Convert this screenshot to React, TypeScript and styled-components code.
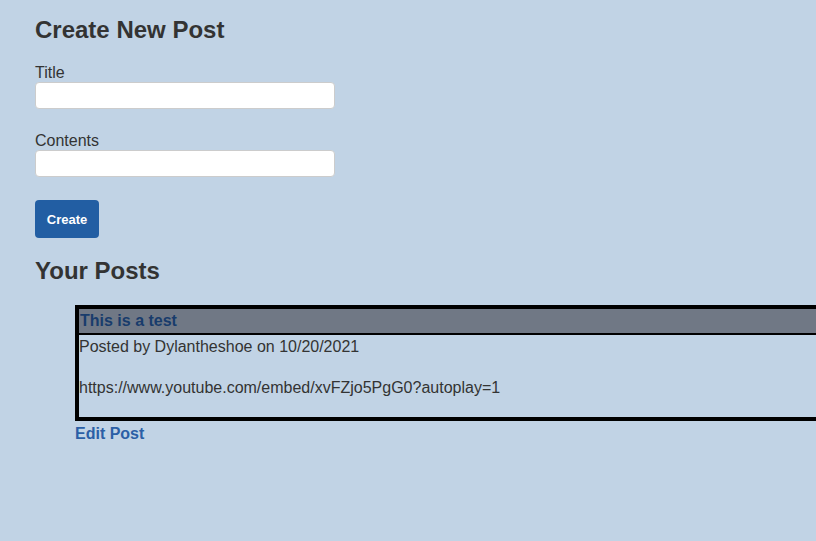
import React from "react";
import styled, { createGlobalStyle } from "styled-components";

const Global = createGlobalStyle`
  html, body {
    margin: 0;
    padding: 0;
    background: #c1d3e5;
    overflow-x: hidden;
  }
  body {
    font-family: "Liberation Sans", Arial, sans-serif;
    font-size: 16px;
    color: #333333;
  }
`;

const Page = styled.main`
  padding: 16px 35px 20px;
  display: flex;
  flex-direction: column;
  align-items: flex-start;
`;

const Heading = styled.h2`
  margin: 0;
  font-size: 24px;
  line-height: 28px;
  font-weight: bold;
  color: #333333;
`;

const Form = styled.form`
  display: flex;
  flex-direction: column;
  align-items: flex-start;
  margin-top: 20px;
`;

const Field = styled.div`
  display: flex;
  flex-direction: column;
  margin-bottom: 23px;
`;

const Label = styled.label`
  font-size: 16px;
  line-height: 18px;
  color: #333333;
`;

const Input = styled.input`
  box-sizing: border-box;
  width: 300px;
  height: 27px;
  margin: 0;
  border: 1px solid #cccccc;
  border-radius: 4px;
  background: #ffffff;
  font-family: inherit;
  font-size: 14px;
  padding: 0 6px;
`;

const Button = styled.button`
  box-sizing: border-box;
  width: 64px;
  height: 38px;
  margin: 0;
  border: none;
  border-radius: 4px;
  background: #225ea3;
  color: #ffffff;
  font-family: inherit;
  font-size: 13px;
  font-weight: bold;
  cursor: pointer;
`;

const PostsHeading = styled(Heading)`
  margin-top: 19px;
`;

const PostList = styled.div`
  align-self: stretch;
  margin-top: 20px;
  margin-right: -35px;
  padding-left: 40px;
  display: flex;
  flex-direction: column;
  align-items: stretch;
`;

const Card = styled.article`
  border: 4px solid #000000;
  border-right: none;
`;

const CardHeader = styled.div`
  background: #707885;
  border-bottom: 2px solid #000000;
  padding: 3px 1px;
  font-weight: bold;
  font-size: 16px;
  line-height: 18px;
  color: #183c6c;
`;

const CardBody = styled.div`
  padding: 3px 0 20px;
  font-size: 16px;
  line-height: 18px;
  color: #333333;
`;

const Meta = styled.div``;

const Embed = styled.div`
  margin-top: 23px;
`;

const EditLink = styled.a`
  align-self: flex-start;
  margin-top: 4px;
  font-weight: bold;
  font-size: 16px;
  line-height: 18px;
  color: #2b5fa6;
  text-decoration: none;
`;

export default function App() {
  return (
    <>
      <Global />
      <Page>
        <Heading>Create New Post</Heading>
        <Form onSubmit={(e) => e.preventDefault()}>
          <Field>
            <Label htmlFor="title">Title</Label>
            <Input id="title" type="text" />
          </Field>
          <Field>
            <Label htmlFor="contents">Contents</Label>
            <Input id="contents" type="text" />
          </Field>
          <Button type="submit">Create</Button>
        </Form>
        <PostsHeading>Your Posts</PostsHeading>
        <PostList>
          <Card>
            <CardHeader>This is a test</CardHeader>
            <CardBody>
              <Meta>Posted by Dylantheshoe on 10/20/2021</Meta>
              <Embed>https://www.youtube.com/embed/xvFZjo5PgG0?autoplay=1</Embed>
            </CardBody>
          </Card>
          <EditLink href="#">Edit Post</EditLink>
        </PostList>
      </Page>
    </>
  );
}
